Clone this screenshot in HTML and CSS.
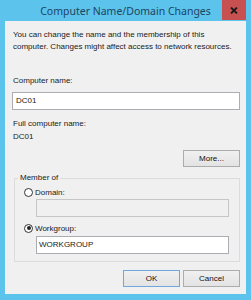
FILE: index.html
```html
<!DOCTYPE html>
<html lang="en">
  <head>
    <meta charset="utf-8" />
    <meta name="viewport" content="width=device-width, initial-scale=1.0" />
    <title>Computer Name/Domain Changes</title>
    <link rel="stylesheet" href="styles.css">
  </head>
  <body>
    <div class="window">
      <div class="titlebar">
        <span class="spacer"></span>
        <span class="title">Computer Name/Domain Changes</span>
        <span class="close">
          <svg width="8" height="7" viewBox="0 0 8 7">
            <path d="M1 0.5 L7 6.5 M7 0.5 L1 6.5" stroke="#1a1a1a" stroke-width="1.8" fill="none" />
          </svg>
        </span>
      </div>
      <div class="client">
        <p class="intro">You can change the name and the membership of this<br>computer. Changes might affect access to network resources.</p>
        <p class="label name-label">Computer name:</p>
        <div class="textbox name-box">DC01</div>
        <p class="label full-label">Full computer name:</p>
        <p class="label full-value">DC01</p>
        <div class="button-row more-row">
          <span class="button">More...</span>
        </div>
        <fieldset class="group">
          <legend>Member of</legend>
          <div class="radio-row"><span class="radio"></span>Domain:</div>
          <div class="textbox inner-box disabled"></div>
          <div class="radio-row workgroup-row"><span class="radio checked"></span>Workgroup:</div>
          <div class="textbox inner-box workgroup-box">WORKGROUP</div>
        </fieldset>
        <div class="button-row footer">
          <span class="button default">OK</span>
          <span class="button">Cancel</span>
        </div>
      </div>
    </div>
  </body>
</html>
```

FILE: styles.css
```css
* {
  padding: 0;
  margin: 0;
  box-sizing: border-box;
}
body {
  background-color: #5cc3ec;
  font-family: "Liberation Sans", Arial, sans-serif;
  font-size: 8px;
  color: #1a1a1a;
}
.window {
  width: 251px;
  height: 300px;
  display: flex;
  flex-direction: column;
}
.titlebar {
  height: 21px;
  display: flex;
  align-items: flex-start;
  padding: 0 5px;
}
.spacer {
  width: 24px;
}
.title {
  flex: 1;
  text-align: center;
  white-space: nowrap;
  font-family: "Noto Sans", sans-serif;
  font-size: 10.5px;
  line-height: 22px;
  color: #1c4562;
}
.close {
  width: 24px;
  height: 20px;
  background: #c75050;
  display: flex;
  align-items: center;
  justify-content: center;
}
.client {
  height: 273px;
  margin: 0 5px;
  background: #f0f0f0;
  padding: 8px 6px 0 7px;
}
.intro,
.label {
  line-height: 12px;
  padding-left: 1px;
}
.name-label {
  margin-top: 22px;
}
.textbox {
  height: 18px;
  border: 1px solid #abadb3;
  background: #fff;
  line-height: 16px;
  padding-left: 3px;
}
.name-box {
  margin-top: 5px;
}
.full-label {
  margin-top: 7px;
  line-height: 13px;
}
.full-value {
  line-height: 13px;
}
.button-row {
  display: flex;
  justify-content: flex-end;
  gap: 3px;
}
.more-row {
  margin-top: 7px;
}
.button {
  width: 57px;
  height: 17px;
  border: 1px solid #acacac;
  background: linear-gradient(#f0f0f0, #e3e3e3);
  text-align: center;
  line-height: 15px;
  color: #111;
}
.button.default {
  border-color: #6fa8dc;
}
.group {
  margin: 4px 0 0 2px;
  border: 1px solid #dcdcdc;
  padding: 1px 10px 7px 9px;
}
.group legend {
  padding: 0 2px;
  margin-left: -6px;
  line-height: 14px;
}
.radio-row {
  display: flex;
  align-items: center;
  gap: 2px;
  height: 12px;
}
.radio {
  width: 9px;
  height: 9px;
  border: 1px solid #333;
  border-radius: 50%;
  background: #fff;
  display: flex;
  align-items: center;
  justify-content: center;
}
.radio.checked::after {
  content: "";
  width: 4px;
  height: 4px;
  border-radius: 50%;
  background: #222;
}
.inner-box {
  margin: 1px 0 0 12px;
  padding-left: 2px;
}
.textbox.disabled {
  background: #f0f0f0;
  border-color: #c6c6c6;
}
.workgroup-row {
  margin-top: 5px;
}
.workgroup-box {
  margin-top: 2px;
}
.footer {
  margin-top: 8px;
}
```
